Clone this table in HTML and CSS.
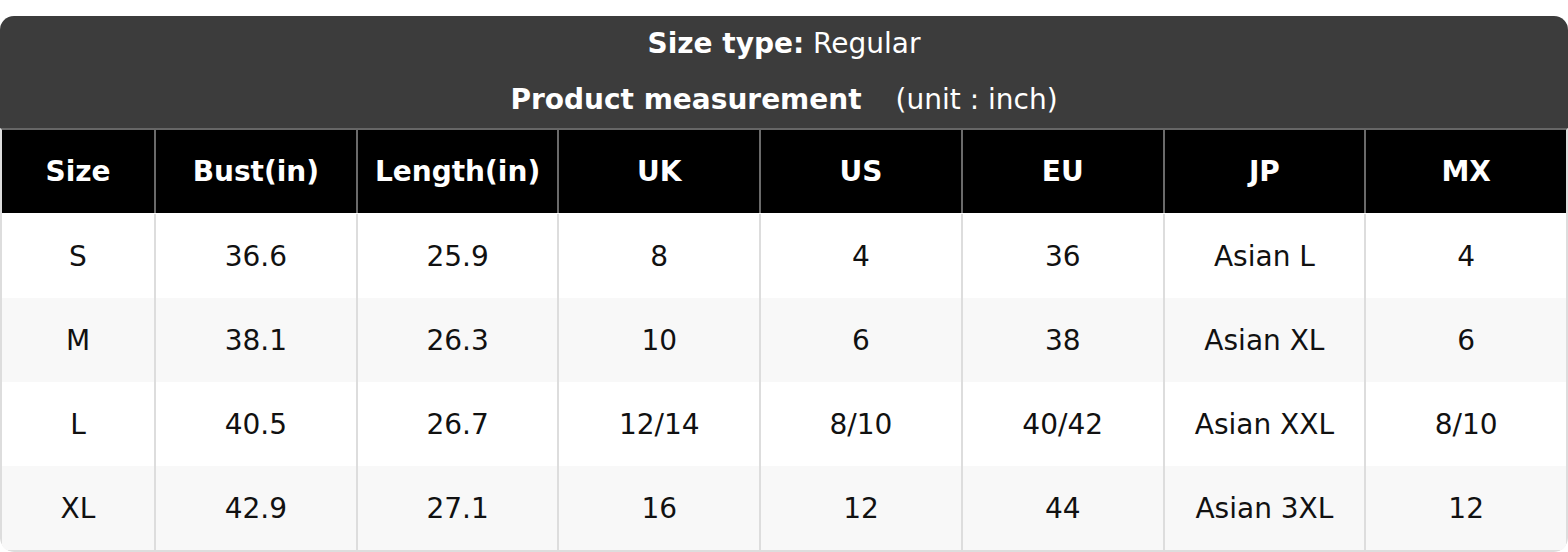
FILE: index.html
```html
<!DOCTYPE html>
<html>
<head>
<meta charset="utf-8">
<link rel="stylesheet" href="styles.css">
</head>
<body>
<div class="chart">
  <div class="title">
    <div class="title-line"><b>Size type:</b> Regular</div>
    <div class="title-line"><b>Product measurement</b><span class="unit">(unit : inch)</span></div>
  </div>
  <div class="grid">
    <div class="cell head">Size</div>
    <div class="cell head">Bust(in)</div>
    <div class="cell head">Length(in)</div>
    <div class="cell head">UK</div>
    <div class="cell head">US</div>
    <div class="cell head">EU</div>
    <div class="cell head">JP</div>
    <div class="cell head">MX</div>

    <div class="cell">S</div><div class="cell">36.6</div><div class="cell">25.9</div><div class="cell">8</div><div class="cell">4</div><div class="cell">36</div><div class="cell">Asian L</div><div class="cell">4</div>

    <div class="cell alt">M</div><div class="cell alt">38.1</div><div class="cell alt">26.3</div><div class="cell alt">10</div><div class="cell alt">6</div><div class="cell alt">38</div><div class="cell alt">Asian XL</div><div class="cell alt">6</div>

    <div class="cell">L</div><div class="cell">40.5</div><div class="cell">26.7</div><div class="cell">12/14</div><div class="cell">8/10</div><div class="cell">40/42</div><div class="cell">Asian XXL</div><div class="cell">8/10</div>

    <div class="cell alt">XL</div><div class="cell alt">42.9</div><div class="cell alt">27.1</div><div class="cell alt">16</div><div class="cell alt">12</div><div class="cell alt">44</div><div class="cell alt">Asian 3XL</div><div class="cell alt">12</div>
  </div>
</div>
</body>
</html>
```

FILE: styles.css
```css
html, body {
  margin: 0;
  padding: 0;
  background: #ffffff;
}
body {
  padding-top: 16px;
  font-family: "DejaVu Sans", sans-serif;
}
.chart {
  width: 1568px;
  border-radius: 14px;
  overflow: hidden;
  box-sizing: border-box;
}
.title {
  background: #3c3c3c;
  color: #ffffff;
  text-align: center;
  font-size: 28px;
}
.title-line {
  height: 56px;
  line-height: 56px;
}
.title-line b {
  font-weight: bold;
}
.unit {
  margin-left: 34px;
}
.grid {
  display: grid;
  grid-template-columns: 152px repeat(7, 1fr);
  grid-auto-rows: 84px;
  border: 2px solid #dddddd;
  border-top: 2px solid #666666;
  border-radius: 0 0 14px 14px;
  font-size: 28px;
  color: #111111;
}
.cell {
  display: flex;
  align-items: center;
  justify-content: center;
  border-left: 2px solid #dddddd;
  background: #ffffff;
  white-space: nowrap;
}
.cell:nth-child(8n+1) {
  border-left: none;
}
.cell.alt {
  background: #f8f8f8;
}
.cell.head {
  background: #000000;
  color: #ffffff;
  font-weight: bold;
  border-left-color: #6a6a6a;
  height: 83px;
}
```
